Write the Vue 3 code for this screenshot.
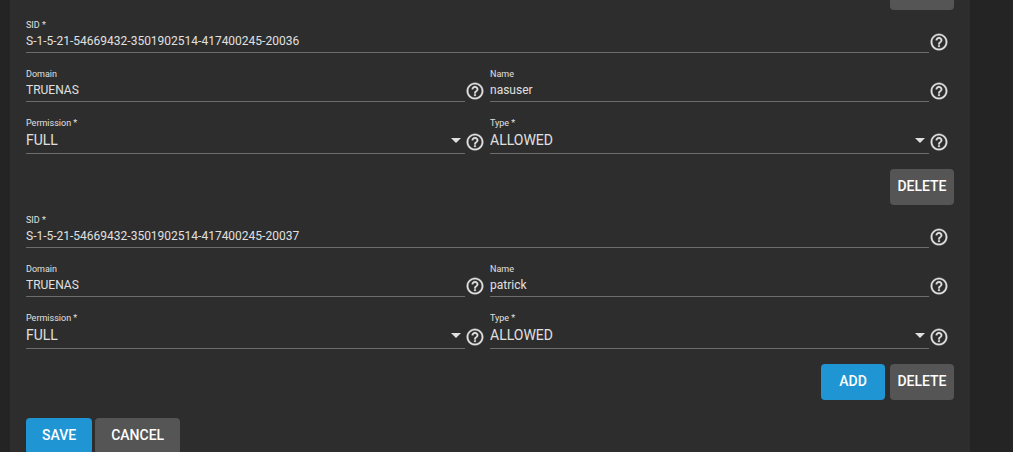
<template>
  <main class="page">
    <form class="card" @submit.prevent>
      <div class="actions">
        <button type="button" class="btn">DELETE</button>
      </div>

      <section v-for="(entry, i) in entries" :key="entry.id" class="entry">
        <div v-for="field in fields" :key="field.key" class="field" :class="{ wide: field.wide, choice: field.options }">
          <div class="control">
            <label :for="`${field.key}-${entry.id}`">{{ field.label }}</label>
            <div v-if="field.options" class="select-wrap">
              <select :id="`${field.key}-${entry.id}`" v-model="entry[field.key]">
                <option v-for="option in field.options" :key="option">{{ option }}</option>
              </select>
              <svg class="arrow" viewBox="0 0 10 5" aria-hidden="true">
                <path d="M0 0h10L5 5z" />
              </svg>
            </div>
            <input v-else :id="`${field.key}-${entry.id}`" v-model="entry[field.key]" type="text" spellcheck="false" />
          </div>
          <button type="button" class="help" :aria-label="`Help: ${field.label}`">
            <svg viewBox="0 0 24 24" aria-hidden="true">
              <path d="M11 18h2v-2h-2v2zm1-16C6.48 2 2 6.48 2 12s4.48 10 10 10 10-4.48 10-10S17.52 2 12 2zm0 18c-4.41 0-8-3.59-8-8s3.59-8 8-8 8 3.59 8 8-3.59 8-8 8zm0-14c-2.21 0-4 1.79-4 4h2c0-1.1.9-2 2-2s2 .9 2 2c0 2-3 1.75-3 5h2c0-2.25 3-2.5 3-5 0-2.21-1.79-4-4-4z" />
            </svg>
          </button>
        </div>
        <div class="actions">
          <button v-if="i === entries.length - 1" type="button" class="btn primary" @click="addEntry">ADD</button>
          <button type="button" class="btn" @click="removeEntry(i)">DELETE</button>
        </div>
      </section>

      <div class="footer">
        <button type="submit" class="btn primary">SAVE</button>
        <button type="button" class="btn">CANCEL</button>
      </div>
    </form>
  </main>
</template>

<script setup>
import { ref } from 'vue'

const fields = [
  { key: 'sid', label: 'SID *', wide: true },
  { key: 'domain', label: 'Domain' },
  { key: 'name', label: 'Name' },
  { key: 'permission', label: 'Permission *', options: ['FULL', 'CHANGE', 'READ'] },
  { key: 'type', label: 'Type *', options: ['ALLOWED', 'DENIED'] }
]

const entries = ref([
  {
    id: 1,
    sid: 'S-1-5-21-54669432-3501902514-417400245-20036',
    domain: 'TRUENAS',
    name: 'nasuser',
    permission: 'FULL',
    type: 'ALLOWED'
  },
  {
    id: 2,
    sid: 'S-1-5-21-54669432-3501902514-417400245-20037',
    domain: 'TRUENAS',
    name: 'patrick',
    permission: 'FULL',
    type: 'ALLOWED'
  }
])

let nextId = 3

const addEntry = () => {
  entries.value.push({ id: nextId++, sid: '', domain: '', name: '', permission: 'FULL', type: 'ALLOWED' })
}

const removeEntry = (index) => {
  entries.value.splice(index, 1)
}
</script>

<style>
body {
  margin: 0;
  background: #242424;
}
</style>

<style scoped>
.page {
  height: 100vh;
  box-sizing: border-box;
  padding: 0 43px 0 10px;
  overflow: hidden;
  background: #242424;
  color: #e0e0e0;
  font-family: Roboto, "Liberation Sans", sans-serif;
}

/* the list is scrolled, so the first row of buttons is partly out of view */
.card {
  margin-top: -26px;
  padding: 0 16px;
  background: #2d2d2d;
}

.entry {
  display: grid;
  grid-template-columns: 1fr 1fr;
  row-gap: 14px;
  padding-top: 8px;
}

.field {
  display: flex;
  align-items: flex-end;
}

.wide,
.entry .actions {
  grid-column: 1 / -1;
}

.entry .actions {
  padding-top: 1px;
}

.control {
  flex: 1;
  min-width: 0;
  border-bottom: 1px solid #6c6c6c;
}

label {
  display: block;
  padding-top: 2px;
  font-size: 9px;
  line-height: 10px;
}

input,
select {
  display: block;
  width: 100%;
  box-sizing: border-box;
  margin: 0;
  padding: 0;
  border: 0;
  outline: 0;
  border-radius: 0;
  background: transparent;
  color: inherit;
  font-family: inherit;
}

input {
  height: 22px;
  font-size: 12px;
}

select {
  height: 25px;
  padding-bottom: 2px;
  appearance: none;
  font-size: 14px;
}

option {
  background: #2d2d2d;
}

.select-wrap {
  position: relative;
}

.arrow {
  position: absolute;
  top: 10px;
  right: 4px;
  width: 10px;
  height: 5px;
  fill: #e0e0e0;
  pointer-events: none;
}

.help {
  width: 25px;
  height: 20px;
  margin: 0 0 1px;
  padding: 0;
  border: 0;
  background: transparent;
  color: inherit;
  cursor: pointer;
}

.choice .help {
  margin-bottom: 2px;
}

.help svg {
  display: block;
  width: 20px;
  height: 20px;
  fill: currentColor;
  stroke: currentColor;
  stroke-width: 0.3;
  overflow: visible;
}

.actions {
  display: flex;
  justify-content: flex-end;
  gap: 5px;
}

.btn {
  min-width: 64px;
  height: 36px;
  padding: 0 7px 2px;
  border: 0;
  border-radius: 4px;
  background: #555;
  color: #fff;
  font-family: inherit;
  font-size: 14px;
  font-weight: 500;
  cursor: pointer;
}

.primary {
  background: #1f95d3;
}

.footer {
  display: flex;
  gap: 3px;
  padding: 18px 0 12px;
}

.footer .btn {
  padding: 0 16px 2px;
}
</style>
